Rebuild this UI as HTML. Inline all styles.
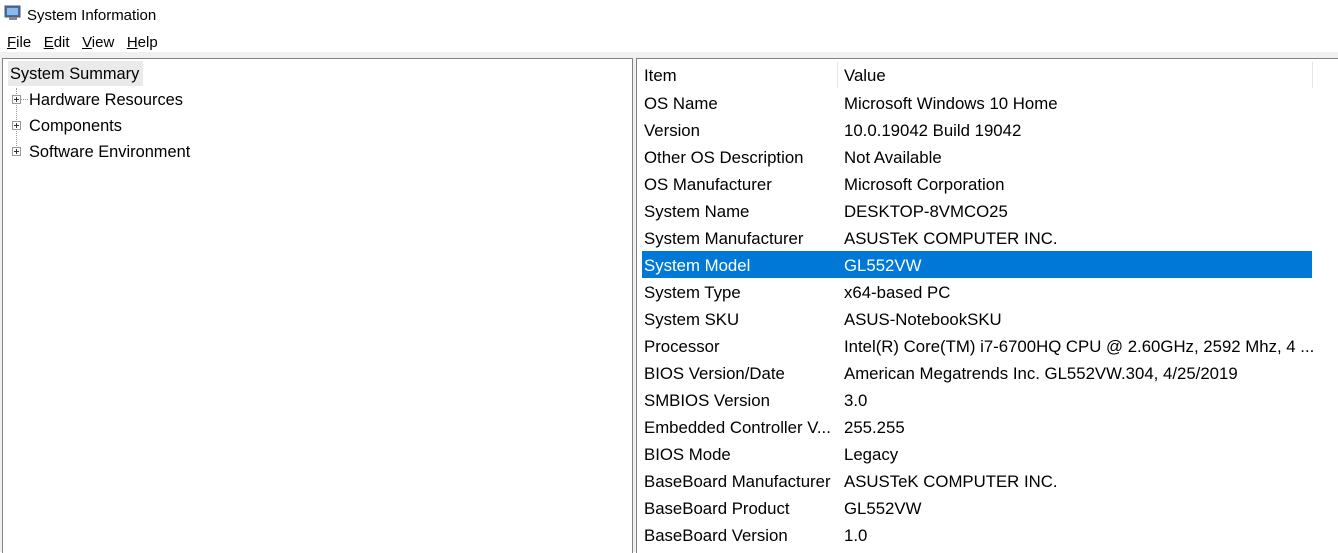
<!DOCTYPE html>
<html><head><style>
body{margin:0;width:1338px;height:552px;overflow:hidden;background:#fff;font-family:"Liberation Sans",sans-serif;font-size:16px;color:#000;position:relative}
.a{position:absolute;white-space:nowrap}
.r{position:absolute;left:642px;width:670px;height:27px;line-height:29px;font-size:16.8px}
.r span{position:absolute;white-space:nowrap}
.r .i{left:2px}.r .v{left:202px}
.sel{background:#0078d7;color:#fff}
.t{font-size:16.4px}
.plus{position:absolute;width:9px;height:9px;border:1px solid #999;box-sizing:border-box;left:12px}
.plus:before{content:"";position:absolute;left:1px;top:3px;width:5px;height:1px;background:#333}
.plus:after{content:"";position:absolute;left:3px;top:1px;width:1px;height:5px;background:#333}
</style></head><body>
<svg class="a" style="left:4px;top:5px" width="18" height="16" viewBox="0 0 18 16"><rect x="1" y="1" width="15" height="11" fill="#3a6fb0" stroke="#556" /><rect x="3" y="3" width="11" height="7" fill="#8fb8e8"/><rect x="5" y="12" width="8" height="3" fill="#888"/></svg>
<div class="a" style="left:27px;top:7px;font-size:15px">System Information</div>
<div class="a" style="left:7px;top:34px;font-size:15px"><u>F</u>ile&nbsp;&nbsp; <u>E</u>dit&nbsp;&nbsp; <u>V</u>iew&nbsp;&nbsp; <u>H</u>elp</div>
<div class="a" style="left:0;top:52px;width:1338px;height:6px;background:#f0f0f0"></div>
<div class="a" style="left:0;top:58px;width:2px;height:494px;background:#f0f0f0"></div>
<div class="a" style="left:2px;top:58px;width:629px;height:494px;border:1px solid #828282;border-bottom:none"></div>
<div class="a" style="left:633px;top:58px;width:3px;height:494px;background:#f0f0f0"></div>
<div class="a" style="left:636px;top:58px;width:702px;height:494px;border-top:1px solid #828282;border-left:1px solid #828282"></div>
<div class="a" style="left:8px;top:61px;width:135px;height:25px;background:#eaeaea"></div>
<div class="a t" style="left:10px;top:65px">System Summary</div>
<div class="a" style="left:16px;top:88px;height:68px;border-left:1px dotted #999"></div>
<div class="plus" style="top:95px"></div><div class="a" style="left:21px;top:99px;width:7px;border-top:1px dotted #999"></div>
<div class="a t" style="left:29px;top:91px">Hardware Resources</div>
<div class="plus" style="top:121px"></div>
<div class="a t" style="left:29px;top:117px">Components</div>
<div class="plus" style="top:147px"></div>
<div class="a t" style="left:29px;top:143px">Software Environment</div>
<div class="a" style="left:837px;top:62px;width:1px;height:26px;background:#e5e5e5"></div>
<div class="a" style="left:1312px;top:62px;width:1px;height:26px;background:#e5e5e5"></div>
<div class="r" style="top:61px"><span class="i">Item</span><span class="v">Value</span></div>
<div class="r" style="top:89px"><span class="i">OS Name</span><span class="v">Microsoft Windows 10 Home</span></div>
<div class="r" style="top:116px"><span class="i">Version</span><span class="v">10.0.19042 Build 19042</span></div>
<div class="r" style="top:143px"><span class="i">Other OS Description</span><span class="v">Not Available</span></div>
<div class="r" style="top:170px"><span class="i">OS Manufacturer</span><span class="v">Microsoft Corporation</span></div>
<div class="r" style="top:197px"><span class="i">System Name</span><span class="v">DESKTOP-8VMCO25</span></div>
<div class="r" style="top:224px"><span class="i">System Manufacturer</span><span class="v">ASUSTeK COMPUTER INC.</span></div>
<div class="r sel" style="top:251px"><span class="i">System Model</span><span class="v">GL552VW</span></div>
<div class="r" style="top:278px"><span class="i">System Type</span><span class="v">x64-based PC</span></div>
<div class="r" style="top:305px"><span class="i">System SKU</span><span class="v">ASUS-NotebookSKU</span></div>
<div class="r" style="top:332px"><span class="i">Processor</span><span class="v">Intel(R) Core(TM) i7-6700HQ CPU @ 2.60GHz, 2592 Mhz, 4 ...</span></div>
<div class="r" style="top:359px"><span class="i">BIOS Version/Date</span><span class="v">American Megatrends Inc. GL552VW.304, 4/25/2019</span></div>
<div class="r" style="top:386px"><span class="i">SMBIOS Version</span><span class="v">3.0</span></div>
<div class="r" style="top:413px"><span class="i">Embedded Controller V...</span><span class="v">255.255</span></div>
<div class="r" style="top:440px"><span class="i">BIOS Mode</span><span class="v">Legacy</span></div>
<div class="r" style="top:467px"><span class="i">BaseBoard Manufacturer</span><span class="v">ASUSTeK COMPUTER INC.</span></div>
<div class="r" style="top:494px"><span class="i">BaseBoard Product</span><span class="v">GL552VW</span></div>
<div class="r" style="top:521px"><span class="i">BaseBoard Version</span><span class="v">1.0</span></div>
</body></html>
